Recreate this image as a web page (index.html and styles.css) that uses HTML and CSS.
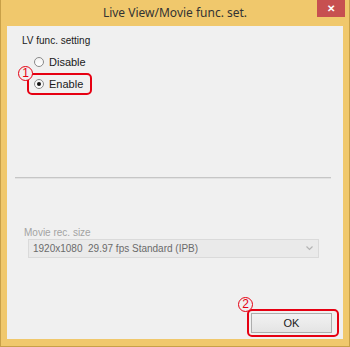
FILE: index.html
```html
<!DOCTYPE html>
<html>
<head>
    <title>Live View/Movie func. set.</title>
    <link rel="stylesheet" href="styles.css">
</head>
<body>
    <div class="window">
        <div class="titlebar">
            <span></span>
            <div class="title">Live View/Movie func. set.</div>
            <div class="close">&#x2715;</div>
        </div>
        <div class="panel">
            <div class="group-label">LV func. setting</div>
            <label class="option">
                <input type="radio" name="lv" value="disable">
                <span>Disable</span>
            </label>
            <label class="option marked">
                <span class="step step-1">1</span>
                <input type="radio" name="lv" value="enable" checked>
                <span>Enable</span>
            </label>

            <div class="separator"></div>

            <div class="group-label muted">Movie rec. size</div>
            <div class="select">
                <span>1920x1080&nbsp; 29.97 fps Standard (IPB)</span>
                <svg width="7" height="5" viewBox="0 0 7 5">
                    <polyline points="0.5,0.5 3.5,3.5 6.5,0.5" fill="none" stroke="#b4b4b4" stroke-width="1.2"/>
                </svg>
            </div>

            <div class="footer">
                <div class="marked ok-wrap">
                    <span class="step step-2">2</span>
                    <button class="button">OK</button>
                </div>
            </div>
        </div>
    </div>
</body>
</html>
```

FILE: styles.css
```css
body {
    margin: 0;
    font-family: "Liberation Sans", Arial, sans-serif;
}
.window {
    width: 350px;
    height: 347px;
    box-sizing: border-box;
    background-color: #f0c86c;
    border: 1px solid #c8a048;
    border-top: none;
    padding: 0 6px 7px 6px;
    display: flex;
    flex-direction: column;
}
.titlebar {
    height: 26px;
    margin: 0 -6px;
    display: grid;
    grid-template-columns: 32px 1fr 28px;
    padding-right: 4px;
}
.title {
    text-align: center;
    font-family: "Noto Sans", sans-serif;
    font-size: 12px;
    line-height: 26px;
    color: #333;
}
.close {
    height: 17px;
    background-color: #c75050;
    color: #fff;
    font-size: 10px;
    font-weight: bold;
    line-height: 17px;
    text-align: center;
}
.panel {
    flex: 1;
    background-color: #f0f0f0;
    display: flex;
    flex-direction: column;
    align-items: flex-start;
    padding: 9px 4px 2px 0;
}
.group-label {
    font-size: 10px;
    line-height: 12px;
    color: #1a1a1a;
    margin-left: 15px;
}
.group-label.muted {
    color: #a3a3a3;
    margin-left: 17px;
}
.option {
    position: relative;
    display: flex;
    align-items: center;
    gap: 5px;
    height: 22px;
    box-sizing: border-box;
    margin-left: 20px;
    padding: 0 7px 0 5px;
    border: 2px solid transparent;
    border-radius: 5px;
    font-size: 11px;
    color: #1a1a1a;
}
.option:first-of-type {
    margin-top: 4px;
}
.option input {
    appearance: none;
    margin: 0;
    width: 10px;
    height: 10px;
    border: 1px solid #8a8a8a;
    border-radius: 50%;
    background: linear-gradient(#f2f2f2, #ffffff);
    display: grid;
    place-items: center;
}
.option input:checked::after {
    content: "";
    width: 4px;
    height: 4px;
    border-radius: 50%;
    background-color: #111;
}
.marked {
    border-color: #e60012;
}
.step {
    position: absolute;
    width: 13px;
    height: 13px;
    border: 1px solid #e60012;
    border-radius: 50%;
    background-color: #f0f0f0;
    color: #e60012;
    font-size: 12px;
    line-height: 13px;
    text-align: center;
}
.step-1 {
    left: -11px;
    top: -9px;
}
.separator {
    align-self: stretch;
    margin: 82px 8px 0 8px;
    border-top: 1px solid #c6c6c6;
    border-bottom: 1px solid #e2e2e2;
}
.separator + .group-label {
    margin-top: 48px;
}
.select {
    margin-left: 21px;
    width: 291px;
    height: 19px;
    box-sizing: border-box;
    border: 1px solid #dadada;
    background-color: #eaeaea;
    display: flex;
    align-items: center;
    justify-content: space-between;
    padding: 0 5px 0 4px;
    font-size: 10px;
    color: #6b6b6b;
}
.footer {
    margin-top: auto;
    align-self: stretch;
    display: flex;
    justify-content: flex-end;
}
.ok-wrap {
    position: relative;
    border: 2px solid #e60012;
    border-radius: 5px;
    padding: 2px 5px 2px 2px;
}
.step-2 {
    left: -11px;
    top: -14px;
}
.button {
    display: block;
    width: 81px;
    height: 20px;
    border: 1px solid #adadad;
    background: linear-gradient(#f2f2f2, #e4e4e4);
    font-family: "Liberation Sans", Arial, sans-serif;
    font-size: 11px;
    color: #1a1a1a;
    padding: 0;
}
```
